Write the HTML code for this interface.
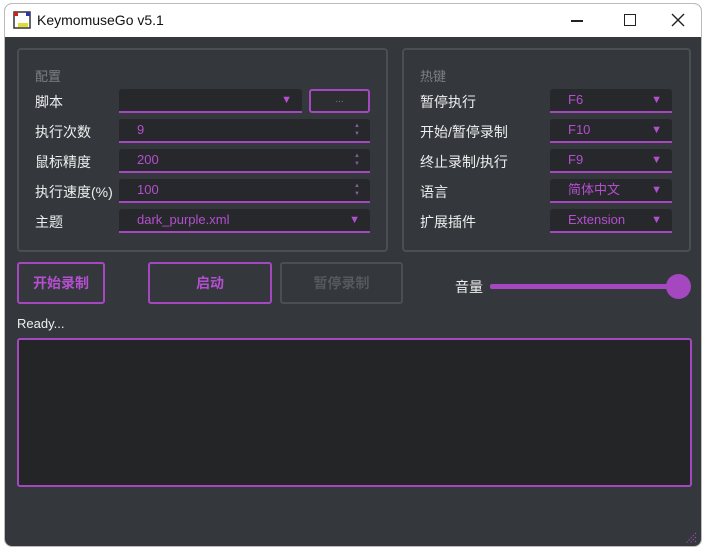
<!DOCTYPE html>
<html><head><meta charset="utf-8"><style>
*{margin:0;padding:0;box-sizing:border-box}
body{width:709px;height:552px;background:#fff;position:relative;overflow:hidden;font-family:"Liberation Sans","Noto Sans CJK SC",sans-serif}
.win{position:absolute;left:4px;top:3px;width:698px;height:544px;border-radius:8px;overflow:hidden;background:#34373c;border:1px solid #bbb}
.tb{position:absolute;left:0;top:0;width:100%;height:33px;background:#fff;color:#111;font-size:14px}
.a{position:absolute}
.grp{position:absolute;border:2px solid #4b4e54;border-radius:4px}
.lbl{position:absolute;color:#eee;font-size:14px}
.gt{position:absolute;color:#7c7f84;font-size:13px}
.inp{position:absolute;background:#26282b;border-bottom:2px solid #a548c0;border-radius:3px 3px 0 0;color:#b44fd0;font-size:13px;padding-left:18px;line-height:22px}
.arr{position:absolute;right:10px;top:0;color:#b44fd0;font-size:11px}
.sp{position:absolute;right:10px;color:#8a5a9a;font-size:6px;line-height:8px;top:3px}
.btn{position:absolute;border:2px solid #a548c0;border-radius:3px;color:#b44fd0;font-size:14px;text-align:center;font-weight:bold}
</style></head><body>
<div class="win">
<div class="tb">
<svg class="a" style="left:8px;top:7px" width="18" height="18"><rect x="1" y="1" width="16" height="16" fill="#fff" stroke="#333" stroke-width="1.5"/><rect x="1" y="1" width="4" height="4" fill="#c22"/><rect x="5" y="12" width="10" height="4" fill="#dd3"/><rect x="13" y="1" width="4" height="4" fill="#33a"/></svg>
<div class="a" style="left:32px;top:8px">KeymomuseGo v5.1</div>
<div class="a" style="left:566px;top:16px;width:12px;height:1.5px;background:#222"></div>
<div class="a" style="left:619px;top:10px;width:12px;height:12px;border:1.5px solid #222"></div>
<svg class="a" style="left:666px;top:9px" width="14" height="14"><path d="M1 1L13 13M13 1L1 13" stroke="#222" stroke-width="1.4"/></svg>
</div>
<div class="grp" style="left:12px;top:44px;width:371px;height:204px"></div>
<div class="grp" style="left:397px;top:44px;width:289px;height:204px"></div>
<div class="gt" style="left:30px;top:62px">配置</div>
<div class="gt" style="left:415px;top:62px">热键</div>
<div class="lbl" style="left:30px;top:88px">脚本</div>
<div class="lbl" style="left:30px;top:118px">执行次数</div>
<div class="lbl" style="left:30px;top:148px">鼠标精度</div>
<div class="lbl" style="left:30px;top:178px">执行速度(%)</div>
<div class="lbl" style="left:30px;top:208px">主题</div>
<div class="inp" style="left:114px;top:85px;width:183px;height:24px"><span class="arr">▼</span></div>
<div class="a" style="left:304px;top:85px;width:61px;height:24px;border:2px solid #a548c0;border-radius:3px;background:#2c2e32;color:#777;font-size:10px;text-align:center;line-height:18px">...</div>
<div class="inp" style="left:114px;top:115px;width:251px;height:24px">9<span class="sp">▲<br>▼</span></div>
<div class="inp" style="left:114px;top:145px;width:251px;height:24px">200<span class="sp">▲<br>▼</span></div>
<div class="inp" style="left:114px;top:175px;width:251px;height:24px">100<span class="sp">▲<br>▼</span></div>
<div class="inp" style="left:114px;top:205px;width:251px;height:24px">dark_purple.xml<span class="arr">▼</span></div>
<div class="lbl" style="left:415px;top:88px">暂停执行</div>
<div class="lbl" style="left:415px;top:118px">开始/暂停录制</div>
<div class="lbl" style="left:415px;top:148px">终止录制/执行</div>
<div class="lbl" style="left:415px;top:178px">语言</div>
<div class="lbl" style="left:415px;top:208px">扩展插件</div>
<div class="inp" style="left:545px;top:85px;width:122px;height:24px">F6<span class="arr">▼</span></div>
<div class="inp" style="left:545px;top:115px;width:122px;height:24px">F10<span class="arr">▼</span></div>
<div class="inp" style="left:545px;top:145px;width:122px;height:24px">F9<span class="arr">▼</span></div>
<div class="inp" style="left:545px;top:175px;width:122px;height:24px">简体中文<span class="arr">▼</span></div>
<div class="inp" style="left:545px;top:205px;width:122px;height:24px">Extension<span class="arr">▼</span></div>
<div class="btn" style="left:12px;top:258px;width:88px;height:42px;line-height:38px">开始录制</div>
<div class="btn" style="left:143px;top:258px;width:124px;height:42px;line-height:38px">启动</div>
<div class="btn" style="left:275px;top:258px;width:123px;height:42px;line-height:38px;border-color:#4b4e54;color:#55585d">暂停录制</div>
<div class="lbl" style="left:450px;top:273px">音量</div>
<div class="a" style="left:485px;top:280px;width:190px;height:5px;background:#a548c0;border-radius:2px"></div>
<div class="a" style="left:661px;top:270px;width:25px;height:25px;background:#a548c0;border-radius:50%"></div>
<div class="a" style="left:12px;top:312px;color:#eee;font-size:13px">Ready...</div>
<div class="a" style="left:12px;top:334px;width:675px;height:149px;background:#232527;border:2px solid #a548c0;border-radius:3px"></div>
<svg class="a" style="left:678px;top:526px" width="14" height="14"><path d="M13 3L3 13M13 7L7 13M13 11L11 13" stroke="#a548c0" stroke-width="1" stroke-dasharray="1.5 1.5"/></svg>
</div>
</body></html>
